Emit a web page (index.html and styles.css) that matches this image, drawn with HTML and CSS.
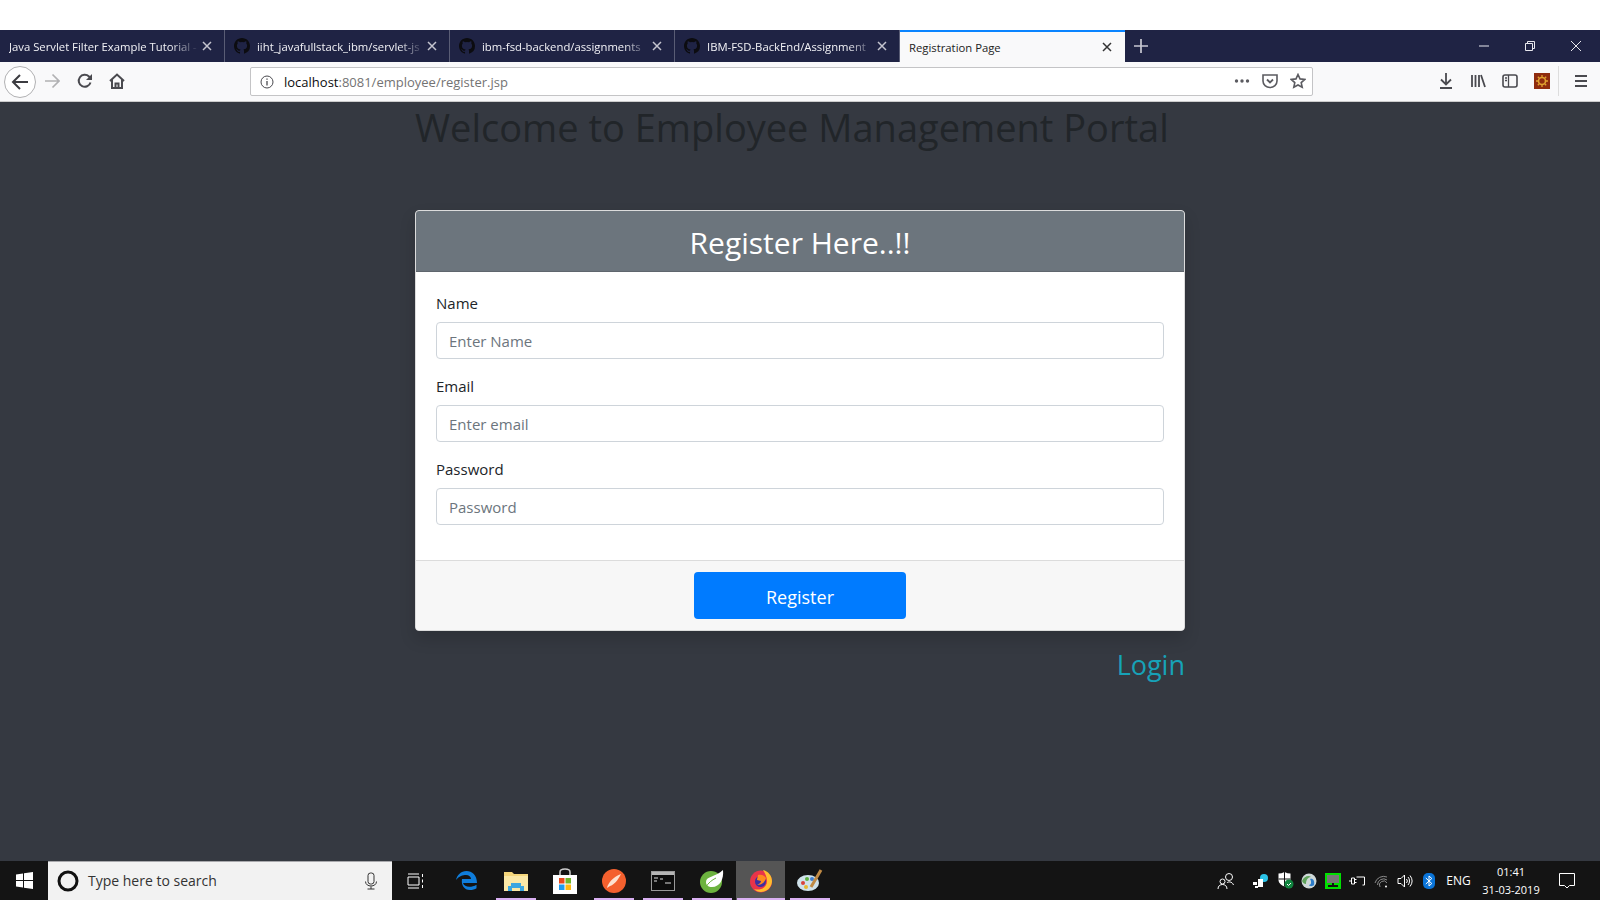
FILE: index.html
```html
<!DOCTYPE html>
<html>
<head>
    <meta charset="UTF-8">
    <title>Registration Page</title>
    <link rel="stylesheet" href="styles.css">
</head>
<body>
<svg class="defs" width="0" height="0">
    <symbol id="gh" viewBox="0 0 16 16"><path d="M8 0C3.58 0 0 3.58 0 8c0 3.54 2.29 6.53 5.47 7.59.4.07.55-.17.55-.38v-1.34c-2.23.48-2.7-1.07-2.7-1.07-.36-.92-.89-1.17-.89-1.17-.73-.5.05-.49.05-.49.8.06 1.23.83 1.23.83.71 1.22 1.87.87 2.33.66.07-.52.28-.87.51-1.07-1.78-.2-3.64-.89-3.64-3.95 0-.87.31-1.59.82-2.15-.08-.2-.36-1.02.08-2.12 0 0 .67-.21 2.2.82a7.6 7.6 0 0 1 4 0c1.53-1.04 2.2-.82 2.2-.82.44 1.1.16 1.92.08 2.12.51.56.82 1.27.82 2.15 0 3.07-1.87 3.75-3.65 3.95.29.25.54.73.54 1.48v2.2c0 .21.15.46.55.38A8 8 0 0 0 16 8c0-4.42-3.58-8-8-8z"/></symbol>
    <symbol id="x" viewBox="0 0 12 12"><path d="M2 2l8 8M10 2l-8 8" stroke="currentColor" stroke-width="1.500" fill="none"/></symbol>
</svg>

<div class="top-gap"></div>

<div class="tabbar">
    <div class="tab"><span class="tab-title">Java Servlet Filter Example Tutorial -</span><svg class="tab-x" width="12" height="12"><use href="#x"/></svg></div>
    <div class="tab"><svg class="tab-fav" width="16" height="16"><use href="#gh"/></svg><span class="tab-title">iiht_javafullstack_ibm/servlet-js</span><svg class="tab-x" width="12" height="12"><use href="#x"/></svg></div>
    <div class="tab"><svg class="tab-fav" width="16" height="16"><use href="#gh"/></svg><span class="tab-title">ibm-fsd-backend/assignments</span><svg class="tab-x" width="12" height="12"><use href="#x"/></svg></div>
    <div class="tab"><svg class="tab-fav" width="16" height="16"><use href="#gh"/></svg><span class="tab-title">IBM-FSD-BackEnd/Assignment</span><svg class="tab-x" width="12" height="12"><use href="#x"/></svg></div>
    <div class="tab active"><span class="tab-title">Registration Page</span><svg class="tab-x" width="12" height="12"><use href="#x"/></svg></div>
    <svg class="new-tab" width="16" height="16" viewBox="0 0 16 16"><path d="M8 1v14M1 8h14" stroke="#c8c8d2" stroke-width="1.700"/></svg>
    <div class="win-btns">
        <svg width="12" height="12" viewBox="0 0 12 12"><path d="M1 6h10" stroke="#e8e8ee" stroke-width="1"/></svg>
        <svg width="12" height="12" viewBox="0 0 12 12"><path d="M1.500 3.500h7v7h-7zM3.500 3.500v-2h7v7h-2" stroke="#e8e8ee" fill="none"/></svg>
        <svg width="12" height="12" viewBox="0 0 12 12"><path d="M1 1l10 10M11 1L1 11" stroke="#e8e8ee" fill="none"/></svg>
    </div>
</div>

<div class="toolbar">
    <div class="back"><svg width="18" height="18" viewBox="0 0 18 18"><path d="M2 9h15M9 2L2 9l7 7" stroke="#3c3c40" stroke-width="2" fill="none"/></svg></div>
    <div class="tool forward"><svg width="16" height="16" viewBox="0 0 16 16"><path d="M1 8h14M8.500 1.500L15 8l-6.500 6.500" stroke="#b1b1b3" stroke-width="1.700" fill="none"/></svg></div>
    <div class="tool"><svg width="16" height="16" viewBox="0 0 16 16"><path d="M13.500 9.500A6 6 0 1 1 12 3.500L14.500 6" stroke="#4a4a4f" stroke-width="2" fill="none"/><path d="M15 1v6H9z" fill="#4a4a4f"/></svg></div>
    <div class="tool"><svg width="16" height="16" viewBox="0 0 16 16"><path d="M1 8l7-6.500L15 8M3 6.500V15h10V6.500M6.500 15v-4.500h3V15" stroke="#4a4a4f" stroke-width="2" fill="none"/></svg></div>
    <div class="urlbar">
        <svg class="info" width="14" height="14" viewBox="0 0 14 14"><circle cx="7" cy="7" r="6" stroke="#4a4a4f" fill="none"/><path d="M7 6v4.500M7 3.500v1.200" stroke="#4a4a4f" stroke-width="1.300"/></svg>
        <span class="url"><span class="host">localhost</span>:8081/employee/register.jsp</span>
        <div class="url-icons">
            <svg width="16" height="16" viewBox="0 0 16 16"><circle cx="2.500" cy="8" r="1.700" fill="#5b5b60"/><circle cx="8" cy="8" r="1.700" fill="#5b5b60"/><circle cx="13.500" cy="8" r="1.700" fill="#5b5b60"/></svg>
            <svg width="16" height="16" viewBox="0 0 16 16"><path d="M1 2h14v6a7 6.500 0 0 1-14 0z" stroke="#5b5b60" stroke-width="1.600" fill="none"/><path d="M5 6.500l3 3 3-3" stroke="#5b5b60" stroke-width="1.800" fill="none"/></svg>
            <svg width="16" height="16" viewBox="0 0 16 16"><path d="M8 1.500l2 4.400 4.800.5-3.600 3.200 1 4.700L8 12l-4.200 2.300 1-4.700-3.600-3.200 4.800-.5z" stroke="#5b5b60" stroke-width="1.600" fill="none"/></svg>
        </div>
    </div>
    <div class="tool-right">
        <div class="tool-r"><svg width="16" height="16" viewBox="0 0 16 16"><path d="M8 0v11M3 6.500l5 5 5-5M2 15h12" stroke="#4a4a4f" stroke-width="1.800" fill="none"/></svg></div>
        <div class="tool-r"><svg width="16" height="16" viewBox="0 0 16 16"><path d="M2 2v12M5.500 2v12M9 2v12M11 2l4 12" stroke="#4a4a4f" stroke-width="1.800" fill="none"/></svg></div>
        <div class="tool-r"><svg width="16" height="16" viewBox="0 0 16 16"><rect x="1" y="2" width="14" height="12" rx="2" stroke="#4a4a4f" stroke-width="1.600" fill="none"/><path d="M6.500 2v12M3 5h2M3 7.500h2" stroke="#4a4a4f" stroke-width="1.300"/></svg></div>
        <div class="tool-r"><svg width="16" height="16" viewBox="0 0 16 16"><rect width="16" height="16" fill="#8f2c0e"/><circle cx="8" cy="8" r="3.500" stroke="#e0a030" stroke-width="1.600" fill="none"/><path d="M8 2v2M8 12v2M2 8h2M12 8h2M3.800 3.800l1.500 1.500M10.700 10.700l1.500 1.500M12.200 3.800l-1.500 1.500M5.300 10.700l-1.500 1.500" stroke="#e0a030" stroke-width="1.300"/></svg></div>
        <div class="tool-sep"></div>
        <div class="tool-menu"><svg width="14" height="14" viewBox="0 0 14 14"><path d="M1 2h12M1 7h12M1 12h12" stroke="#4a4a4f" stroke-width="1.800"/></svg></div>
    </div>
</div>

<div class="page">
    <div class="wrap">
        <h1 class="page-title">Welcome to Employee Management Portal</h1>
        <form class="card">
            <div class="card-header">Register Here..!!</div>
            <div class="card-body">
                <div class="form-group">
                    <label>Name</label>
                    <input type="text" placeholder="Enter Name">
                </div>
                <div class="form-group">
                    <label>Email</label>
                    <input type="text" placeholder="Enter email">
                </div>
                <div class="form-group">
                    <label>Password</label>
                    <input type="text" placeholder="Password">
                </div>
            </div>
            <div class="card-footer">
                <button type="button" class="btn">Register</button>
            </div>
        </form>
        <a class="login" href="#">Login</a>
    </div>
</div>

<div class="taskbar">
    <div class="start"><svg width="17" height="17" viewBox="0 0 17 17"><path d="M0 2.500l7-1v6.500H0zM8 1.300L17 0v8H8zM0 9h7v6.500l-7-1zM8 9h9v8l-9-1.300z" fill="#fff"/></svg></div>
    <div class="search">
        <svg width="22" height="22" viewBox="0 0 22 22"><circle cx="11" cy="11" r="9" stroke="#111" stroke-width="3" fill="none"/></svg>
        <span class="search-text">Type here to search</span>
        <svg class="mic" width="14" height="18" viewBox="0 0 14 18"><rect x="4" y="1" width="6" height="11" rx="2.500" stroke="#333" fill="none"/><path d="M1.500 9.500c0 6 11 6 11 0M7 14.500V17M3.500 17h7" stroke="#333" fill="none"/></svg>
    </div>
    <div class="task-view"><svg width="18" height="16" viewBox="0 0 18 16"><path d="M1 4h11v8H1zM1 1h11M1 15h11M15.500 1v3M15.500 6.500v3M15.500 12v3" stroke="#fff" fill="none"/></svg></div>
    <div class="app">
        <svg width="26" height="26" viewBox="0 0 26 26"><path d="M4 15h19C23 7 18 3 12.500 3 7 3 3 7 2 12c3-4 7-5 10-5 3 0 5 2 5 4H8c-1 6 2 11 8 11 2.500 0 5-.7 6.500-1.800v-3.500c-5 3-12 3-13.500-1.700z" fill="#0f7ddb"/></svg>
    </div>
    <div class="app open">
        <svg width="24" height="20" viewBox="0 0 24 20"><path d="M0 1h8l2 2h14v17H0z" fill="#f5d67b"/><path d="M0 5h24v15H0z" fill="#fbe8a6"/><path d="M7 12h10v3h3v5h-4v-3H8v3H4v-5h3z" fill="#3ba6e0"/></svg>
    </div>
    <div class="app">
        <svg width="24" height="26" viewBox="0 0 24 26"><path d="M7 7V4c0-4 10-4 10 0v3" stroke="#ccc" stroke-width="1.500" fill="none"/><path d="M0 7h24v19H0z" fill="#fff"/><rect x="6" y="10" width="5.500" height="5.500" fill="#e8491d"/><rect x="12.500" y="10" width="5.500" height="5.500" fill="#6fb52b"/><rect x="6" y="16.500" width="5.500" height="5.500" fill="#1d9bf0"/><rect x="12.500" y="16.500" width="5.500" height="5.500" fill="#fdb813"/></svg>
    </div>
    <div class="app open">
        <svg width="24" height="24" viewBox="0 0 24 24"><circle cx="12" cy="12" r="12" fill="#f4602e"/><path d="M5 19c1-5 6-11 14-14-3 6-7 11-11 12z" fill="#fde1d0"/></svg>
    </div>
    <div class="app open">
        <svg width="24" height="20" viewBox="0 0 24 20"><rect x=".5" y=".5" width="23" height="19" fill="#0c0c0c" stroke="#999"/><rect x="1" y="1" width="22" height="3" fill="#b5b5b5"/><path d="M3 7h4M3 10h3M9 8h3M14 12h6" stroke="#ddd" fill="none"/></svg>
    </div>
    <div class="app open">
        <svg width="26" height="24" viewBox="0 0 26 24"><circle cx="12" cy="13" r="11" fill="#6db33f"/><path d="M24 1c1 9-3 17-11 17-4 0-6-2-6-5 0-6 10-5 17-12z" fill="#fff"/><path d="M7 18c2-4 6-7 10-9" stroke="#6db33f" fill="none"/></svg>
    </div>
    <div class="app open current">
        <svg width="24" height="24" viewBox="0 0 24 24"><circle cx="12" cy="12.500" r="11" fill="#e8344a"/><path d="M14 1c5 1 9 6 9 11 0 6-5 11-11 11-3 0-5-1-7-3 6 2 13-1 13-8 0-4-2-8-4-11z" fill="#ffbd2e"/><circle cx="11.500" cy="12.500" r="5.500" fill="#3d2fa0"/><path d="M9 6c3-1 6 0 8 3-1 4-4 7-9 7 3-1 4-3 4-4l-4-1c0-2 1-3 1-5z" fill="#ff8a1e"/></svg>
    </div>
    <div class="app open">
        <svg width="26" height="26" viewBox="0 0 26 26"><ellipse cx="11" cy="15" rx="11" ry="8" fill="#cfe2ea"/><circle cx="6" cy="15" r="2" fill="#d9433a"/><circle cx="10" cy="11" r="2" fill="#5cb040"/><circle cx="15" cy="11" r="2" fill="#3f7fd0"/><circle cx="9" cy="19" r="2" fill="#e8b92f"/><path d="M14 19L24 2" stroke="#c08a45" stroke-width="3"/></svg>
    </div>
    <div class="tray">
        <div class="people"><svg width="18" height="18" viewBox="0 0 18 18"><circle cx="12" cy="5" r="3.500" stroke="#fff" fill="none"/><circle cx="5.500" cy="9.500" r="2.500" stroke="#fff" fill="none"/><path d="M1 17c0-3 2-4.500 4.500-4.500S10 14 10 17M10 11c.6-1.500 5-2 6.500 2" stroke="#fff" fill="none"/></svg></div>
        <div class="tray-ico"><svg width="16" height="16" viewBox="0 0 16 16"><circle cx="11" cy="5" r="4" fill="#2cc4e8"/><path d="M0 9h4v3H0zM5 6h5v8H5zM2 13h3v2H2z" fill="#fff"/></svg></div>
        <div class="tray-ico"><svg width="17" height="17" viewBox="0 0 17 17"><path d="M7.500 0c2 1 4 1.500 6 1.500V8c0 3-3 5.500-6 6.500-3-1-6-3.500-6-6.500V1.500c2 0 4-.5 6-1.500z" fill="#fff"/><path d="M7.500 0v14.500M1.500 7h12" stroke="#111"/><circle cx="12" cy="12" r="4.500" fill="#10843f"/><path d="M10 12l1.500 1.500L14 11" stroke="#fff" fill="none"/></svg></div>
        <div class="tray-ico"><svg width="16" height="16" viewBox="0 0 16 16"><circle cx="8" cy="8" r="7.500" fill="#cfd8d8"/><path d="M1 8c2-5 7-6 9-4-3 0-5 3-5 7-2 0-3-1-4-3z" fill="#5fa35a"/><path d="M9 6c3-1 5 2 4 6-1 1-4 2-5 0 2 0 3-3 1-6z" fill="#2b7bc8"/></svg></div>
        <div class="tray-ico"><svg width="16" height="16" viewBox="0 0 16 16"><rect width="16" height="16" fill="#00e000"/><rect x="2" y="2" width="12" height="8" fill="#777"/><path d="M7 10h2v2H7zM3 12h10v2H3z" fill="#111"/></svg></div>
        <div class="tray-ico"><svg width="16" height="14" viewBox="0 0 16 14"><path d="M0 7h2.500M2.500 4h3v6h-3zM5.500 5.500h2M5.500 8.500h2M7.500 3h8v8h-2" stroke="#fff" fill="none"/></svg></div>
        <div class="tray-ico"><svg width="14" height="14" viewBox="0 0 14 14"><path d="M1 9a9 9 0 0 1 12-6M3.500 11a6 6 0 0 1 9.500-5M6 13a3 3 0 0 1 7-4" stroke="#8b8b8b" fill="none"/><circle cx="12" cy="12.500" r="1" fill="#fff"/></svg></div>
        <div class="tray-ico"><svg width="16" height="14" viewBox="0 0 16 14"><path d="M1 4.500h3L7.500 1v12L4 9.500H1zM9.500 5a3 3 0 0 1 0 4M11 3a6 6 0 0 1 0 8M13 1.500a9 9 0 0 1 0 11" stroke="#fff" fill="none"/></svg></div>
        <div class="tray-ico"><svg width="12" height="16" viewBox="0 0 12 16"><rect width="12" height="16" rx="5" fill="#0a74d8"/><path d="M2.800 5l6 5.500L6 13V3l2.800 2.500-6 5.500" stroke="#fff" fill="none"/></svg></div>
        <div class="lang">ENG</div>
        <div class="clock"><div>01:41</div><div>31-03-2019</div></div>
        <div class="notif"><svg width="16" height="16" viewBox="0 0 16 16"><path d="M.5.500h15v12h-5L8 15l-2.500-2.500h-5z" stroke="#fff" fill="none"/></svg></div>
    </div>
</div>
</body>
</html>
```

FILE: styles.css
```css
*{
    box-sizing:border-box;
}

html,body{
    margin:0;
    height:900px;
    overflow:hidden;
}

body{
    display:flex;
    flex-direction:column;
    font-family:"Open Sans","Liberation Sans",sans-serif;
    background:#343a40;
}

.defs{
    display:none;
}

.top-gap{
    height:30px;
    background:#fff;
}

/* browser tabs */
.tabbar{
    height:32px;
    background:#1f2344;
    display:flex;
    align-items:stretch;
}

.tab{
    width:225px;
    display:flex;
    align-items:center;
    padding:0 11px 0 9px;
    color:#f2f2f6;
    font-size:11.3px;
    border-right:1px solid #5a5d75;
}

.tab.active{
    background:#f9f9fa;
    color:#222;
    border-right:0;
    border-top:2px solid #0a84ff;
    padding-right:12px;
}

.tab-fav{
    flex:none;
    margin-right:7px;
    fill:#0c0c10;
}

.tab-title{
    flex:1;
    white-space:nowrap;
    overflow:hidden;
    -webkit-mask-image:linear-gradient(to right,#000 85%,transparent);
    mask-image:linear-gradient(to right,#000 85%,transparent);
}

.tab.active .tab-title{
    -webkit-mask-image:none;
    mask-image:none;
}

.tab-x{
    flex:none;
    margin-left:2px;
    color:#c4c4ce;
}

.tab.active .tab-x{
    color:#333;
}

.new-tab{
    align-self:center;
    margin-left:8px;
}

.win-btns{
    margin-left:auto;
    display:flex;
    align-items:center;
    gap:34px;
    padding-right:18px;
}

/* address bar */
.toolbar{
    height:40px;
    background:#f9f9fa;
    border-bottom:1px solid #ccc;
    display:flex;
    align-items:center;
    padding-left:4px;
}

.back{
    width:32px;
    height:32px;
    border:1px solid #b1b1b3;
    border-radius:50%;
    background:#fff;
    display:flex;
    align-items:center;
    justify-content:center;
}

.tool{
    width:32px;
    margin-bottom:2px;
    display:flex;
    justify-content:center;
}

.tool.forward{
    margin-right:1px;
}

.urlbar{
    margin-left:117px;
    width:1063px;
    height:29px;
    background:#fff;
    border:1px solid #c4c4c6;
    border-radius:2px;
    display:flex;
    align-items:center;
    padding-left:9px;
}

.url{
    margin-left:10px;
    font-size:13px;
    color:#737373;
}

.host{
    color:#0c0c0d;
}

.url-icons{
    margin-left:auto;
    margin-bottom:2px;
    display:flex;
    gap:12px;
    padding-right:6px;
}

.tool-right{
    margin-left:auto;
    margin-bottom:2px;
    display:flex;
    align-items:center;
    padding-right:12px;
}

.tool-r{
    width:32px;
    display:flex;
    justify-content:center;
}

.tool-sep{
    width:1px;
    height:30px;
    background:#ddd;
}

.tool-menu{
    display:flex;
    margin-left:15px;
}

/* page */
.page{
    flex:1;
    display:flex;
    flex-direction:column;
    align-items:center;
    background:#353941;
}

.page-title{
    margin:0 0 59px;
    height:49px;
    line-height:50px;
    font-size:38px;
    font-weight:400;
    white-space:nowrap;
    color:#212529;
}

.wrap{
    width:770px;
    display:flex;
    flex-direction:column;
}

.card{
    background:#fff;
    border:1px solid #dcdcdc;
    border-radius:4px;
    box-shadow:0 8px 16px rgba(0,0,0,.15);
    overflow:hidden;
}

.card-header{
    height:61px;
    line-height:64px;
    background:#6c757d;
    border-bottom:1px solid #5f666d;
    color:#fff;
    font-size:30px;
    text-align:center;
}

.card-body{
    padding:20px 20px 19px;
}

.form-group{
    margin-bottom:16px;
}

.form-group label{
    display:block;
    height:24px;
    line-height:22px;
    margin-bottom:6px;
    font-size:15px;
    color:#212529;
}

.form-group input{
    display:block;
    width:100%;
    height:37px;
    padding:0 12px;
    border:1px solid #ced4da;
    border-radius:4px;
    font-family:inherit;
    font-size:15px;
    background:#fff;
}

.form-group input::placeholder{
    color:#6c757d;
    opacity:1;
}

.card-footer{
    height:70px;
    background:#f7f7f7;
    border-top:1px solid #dcdcdc;
    display:flex;
    justify-content:center;
    padding-top:11px;
}

.btn{
    width:212px;
    height:47px;
    padding:2px 0 0;
    border:0;
    border-radius:4px;
    background:#007bff;
    color:#fff;
    font-family:inherit;
    font-size:18px;
}

.login{
    align-self:flex-end;
    margin-top:15px;
    font-size:27px;
    color:#17a2b8;
    text-decoration:none;
}

/* windows taskbar */
.taskbar{
    height:39px;
    background:#141414;
    display:flex;
    align-items:stretch;
}

.start{
    width:48px;
    display:flex;
    align-items:center;
    justify-content:center;
}

.search{
    width:344px;
    background:#f2f2f2;
    display:flex;
    align-items:center;
    padding-left:9px;
    border-top:1px solid #a9a9ad;
}

.search-text{
    margin-left:9px;
    margin-bottom:2px;
    font-size:14px;
    color:#333;
}

.mic{
    margin-left:auto;
    margin-right:14px;
}

.task-view{
    width:50px;
    padding-right:3px;
    display:flex;
    align-items:center;
    justify-content:center;
}

.app{
    width:49px;
    display:flex;
    align-items:center;
    justify-content:center;
    background-repeat:no-repeat;
    background-position:center bottom;
}

.app.open{
    background-image:linear-gradient(#d9b0f2,#d9b0f2);
    background-size:40px 2px;
}

.app.current{
    background-color:#555;
    background-size:48px 2px;
}

.tray{
    margin-left:auto;
    display:flex;
    align-items:center;
    color:#fff;
    padding-right:10px;
}

.people{
    width:40px;
    margin-right:3px;
    display:flex;
    justify-content:center;
}

.tray-ico{
    width:24px;
    display:flex;
    justify-content:center;
}

.lang{
    width:35px;
    text-align:center;
    font-size:12px;
}

.clock{
    width:68px;
    padding-left:2px;
    text-align:center;
    font-size:11px;
    line-height:18px;
}

.notif{
    width:46px;
    display:flex;
    justify-content:center;
}
```
